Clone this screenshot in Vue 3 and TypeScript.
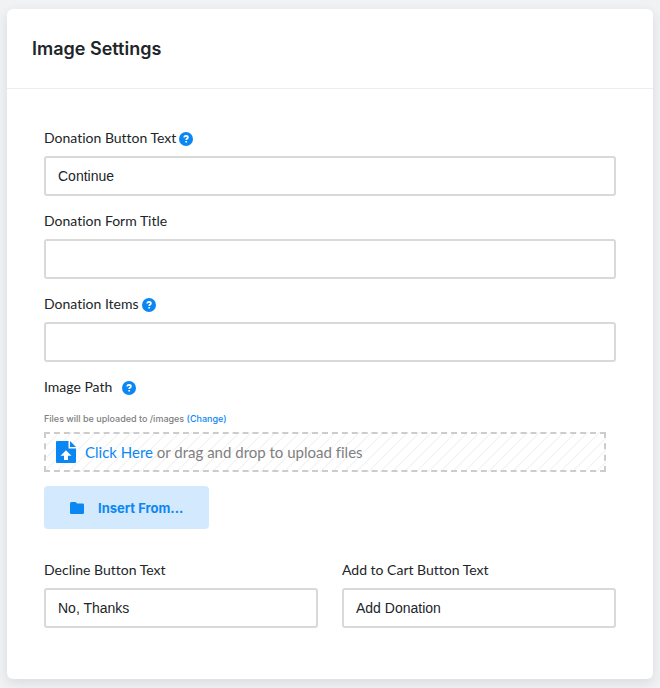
<script setup lang="ts">
import { reactive } from 'vue'

const form = reactive({
  buttonText: 'Continue',
  title: '',
  items: '',
  decline: 'No, Thanks',
  addToCart: 'Add Donation',
})
</script>

<template>
  <main class="page">
    <form class="card" @submit.prevent>
      <header class="card-header">
        <h1>Image Settings</h1>
      </header>
      <div class="card-body">
        <div class="field">
          <div class="label-row">
            <label for="button-text">Donation Button Text</label>
            <button class="help" type="button" aria-label="Help">
              <svg viewBox="0 0 14 14"><circle cx="7" cy="7" r="7" /><path d="M5.1 5.5C5.2 4.4 6 3.9 7 3.9s1.9.5 1.9 1.5C8.900 6.600 7.200 6.500 7.200 8M7.200 9.100v1.500" /></svg>
            </button>
          </div>
          <input id="button-text" v-model="form.buttonText" type="text" />
        </div>
        <div class="field">
          <div class="label-row">
            <label for="form-title">Donation Form Title</label>
          </div>
          <input id="form-title" v-model="form.title" type="text" />
        </div>
        <div class="field">
          <div class="label-row">
            <label for="items">Donation Items</label>
            <button class="help" type="button" aria-label="Help">
              <svg viewBox="0 0 14 14"><circle cx="7" cy="7" r="7" /><path d="M5.1 5.5C5.2 4.4 6 3.9 7 3.9s1.9.5 1.9 1.5C8.900 6.600 7.200 6.500 7.200 8M7.200 9.100v1.500" /></svg>
            </button>
          </div>
          <input id="items" v-model="form.items" type="text" />
        </div>
        <div class="upload">
          <div class="label-row wide">
            <span>Image Path</span>
            <button class="help" type="button" aria-label="Help">
              <svg viewBox="0 0 14 14"><circle cx="7" cy="7" r="7" /><path d="M5.1 5.5C5.2 4.4 6 3.9 7 3.9s1.9.5 1.9 1.5C8.900 6.600 7.200 6.500 7.200 8M7.200 9.100v1.500" /></svg>
            </button>
          </div>
          <p class="note">Files will be uploaded to /images <a href="#">(Change)</a></p>
          <div class="dropzone">
            <svg class="file-icon" viewBox="0 0 20 22">
              <path d="M1 0H12.500V7.500H20V21Q20 22 19 22H1Q0 22 0 21V1Q0 0 1 0Z" />
              <path d="M14 0L20 6H14Z" />
              <path class="arrow" d="M10 9.300L15.500 14.800H12V19H8V14.800H4.500Z" />
            </svg>
            <p><a href="#">Click Here</a> or drag and drop to upload files</p>
          </div>
          <button class="insert" type="button">
            <svg viewBox="0 0 14 12"><path d="M1.500 0H5.500L7.200 1.600H12.700Q14 1.600 14 2.900V10.700Q14 12 12.700 12H1.300Q0 12 0 10.700V1.500Q0 0 1.500 0Z" /></svg>
            <span>Insert From...</span>
          </button>
        </div>
        <div class="columns">
          <div class="field">
            <div class="label-row"><label for="decline">Decline Button Text</label></div>
            <input id="decline" v-model="form.decline" type="text" />
          </div>
          <div class="field">
            <div class="label-row"><label for="add-to-cart">Add to Cart Button Text</label></div>
            <input id="add-to-cart" v-model="form.addToCart" type="text" />
          </div>
        </div>
      </div>
    </form>
  </main>
</template>

<style>
body {
  margin: 0;
  background: #f1f2f4;
}
</style>

<style scoped>
* {
  box-sizing: border-box;
}
.page {
  padding: 9px 7px;
  font-family: Lato, "Liberation Sans", sans-serif;
  font-size: 14px;
  font-variant-ligatures: none;
  color: #212529;
}
.card {
  background: #fff;
  border-radius: 6px;
  box-shadow: 0 4px 12px rgba(50, 60, 75, 0.12);
}
.card-header {
  padding: 24px 25px;
  border-bottom: 1px solid #ebedef;
}
h1 {
  margin: 0;
  font: 600 18px/31px Inter, "Liberation Sans", sans-serif;
}
.card-body {
  padding: 37px 37px 51px;
}
.field {
  margin-bottom: 13px;
}
.label-row {
  display: flex;
  align-items: center;
  gap: 3px;
  height: 24px;
  margin-bottom: 6px;
  line-height: 24px;
}
.wide {
  gap: 10px;
}
.help {
  width: 14px;
  height: 14px;
  margin-top: 2px;
  padding: 0;
  border: 0;
  background: none;
}
.help svg {
  display: block;
  fill: #0b87f4;
}
.help path {
  fill: none;
  stroke: #fff;
  stroke-width: 1.7;
}
input {
  display: block;
  width: 100%;
  height: 40px;
  padding: 0 12px;
  border: 2px solid #d9d9d9;
  border-radius: 3px;
  background: #fff;
  color: #212529;
  font: 14px "Liberation Sans", sans-serif;
}
a {
  color: #0b87f4;
  text-decoration: none;
}
.note {
  margin: 0 0 5px;
  font: 500 9px/16px Inter, "Liberation Sans", sans-serif;
  color: #808080;
}
.upload .label-row {
  margin-bottom: 12px;
}
.dropzone {
  display: flex;
  align-items: center;
  gap: 9px;
  height: 40px;
  margin-right: 10px;
  padding: 0 10px;
  border: 2px dashed #ccc;
  background: linear-gradient(135deg, #fff 45%, #f2f2f2 48%, #f2f2f2 52%, #fff 55%) 0 0 / 12px 12px;
  color: #808080;
  font-size: 15px;
}
.dropzone p {
  margin: 0;
}
.file-icon {
  width: 20px;
  height: 22px;
  fill: #0b87f4;
}
.file-icon .arrow {
  fill: #fff;
}
.insert {
  display: flex;
  align-items: center;
  gap: 14px;
  height: 43px;
  margin-top: 14px;
  padding: 0 26px;
  border: 0;
  border-radius: 4px;
  background: #d3e9fd;
  color: #0b87f4;
  font: 700 13px Inter, "Liberation Sans", sans-serif;
}
.insert svg {
  width: 14px;
  height: 12px;
  fill: currentColor;
}
.columns {
  display: grid;
  grid-template-columns: 1fr 1fr;
  gap: 24px;
  margin-top: 29px;
}
.columns .field {
  margin-bottom: 0;
}
</style>
